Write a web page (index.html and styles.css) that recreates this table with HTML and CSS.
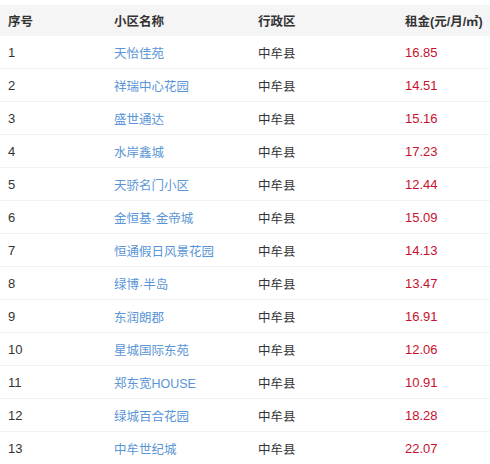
FILE: index.html
```html
<!DOCTYPE html>
<html lang="zh">
<head>
<meta charset="utf-8">
<link rel="stylesheet" href="styles.css">
</head>
<body>
<div class="table">
  <div class="row head">
    <div class="c">序号</div><div class="c">小区名称</div><div class="c">行政区</div><div class="c">租金(元/月/㎡)</div>
  </div>
  <div class="row"><div class="c">1</div><div class="c link">天怡佳苑</div><div class="c cn">中牟县</div><div class="c price">16.85</div></div>
  <div class="row"><div class="c">2</div><div class="c link">祥瑞中心花园</div><div class="c cn">中牟县</div><div class="c price">14.51</div></div>
  <div class="row"><div class="c">3</div><div class="c link">盛世通达</div><div class="c cn">中牟县</div><div class="c price">15.16</div></div>
  <div class="row"><div class="c">4</div><div class="c link">水岸鑫城</div><div class="c cn">中牟县</div><div class="c price">17.23</div></div>
  <div class="row"><div class="c">5</div><div class="c link">天骄名门小区</div><div class="c cn">中牟县</div><div class="c price">12.44</div></div>
  <div class="row"><div class="c">6</div><div class="c link">金恒基·金帝城</div><div class="c cn">中牟县</div><div class="c price">15.09</div></div>
  <div class="row"><div class="c">7</div><div class="c link">恒通假日风景花园</div><div class="c cn">中牟县</div><div class="c price">14.13</div></div>
  <div class="row"><div class="c">8</div><div class="c link">绿博·半岛</div><div class="c cn">中牟县</div><div class="c price">13.47</div></div>
  <div class="row"><div class="c">9</div><div class="c link">东润朗郡</div><div class="c cn">中牟县</div><div class="c price">16.91</div></div>
  <div class="row"><div class="c">10</div><div class="c link">星城国际东苑</div><div class="c cn">中牟县</div><div class="c price">12.06</div></div>
  <div class="row"><div class="c">11</div><div class="c link">郑东宽HOUSE</div><div class="c cn">中牟县</div><div class="c price">10.91</div></div>
  <div class="row"><div class="c">12</div><div class="c link">绿城百合花园</div><div class="c cn">中牟县</div><div class="c price">18.28</div></div>
  <div class="row"><div class="c">13</div><div class="c link">中牟世纪城</div><div class="c cn">中牟县</div><div class="c price">22.07</div></div>
</div>
</body>
</html>
```

FILE: styles.css
```css
html, body {
  margin: 0;
  padding: 0;
  background: #fff;
}
body {
  font-family: "Liberation Sans", Arial, "Noto Sans CJK SC", sans-serif;
  font-size: 13px;
  color: #333;
}
.table {
  padding-top: 5px;
  width: 490px;
}
.row {
  display: grid;
  grid-template-columns: 106px 144px 147px 1fr;
  height: 33px;
  align-items: center;
  border-bottom: 1px solid #f2f2f2;
  box-sizing: border-box;
}
.row.head {
  height: 31px;
  background: #f5f5f5;
  font-weight: bold;
  font-size: 12.5px;
  border-bottom: none;
}
.c {
  padding-left: 8px;
  white-space: nowrap;
}
.cn {
  font-size: 12.5px;
}
.link {
  color: #5a95d6;
  font-size: 12.5px;
}
.price {
  color: #c8102e;
}
```
